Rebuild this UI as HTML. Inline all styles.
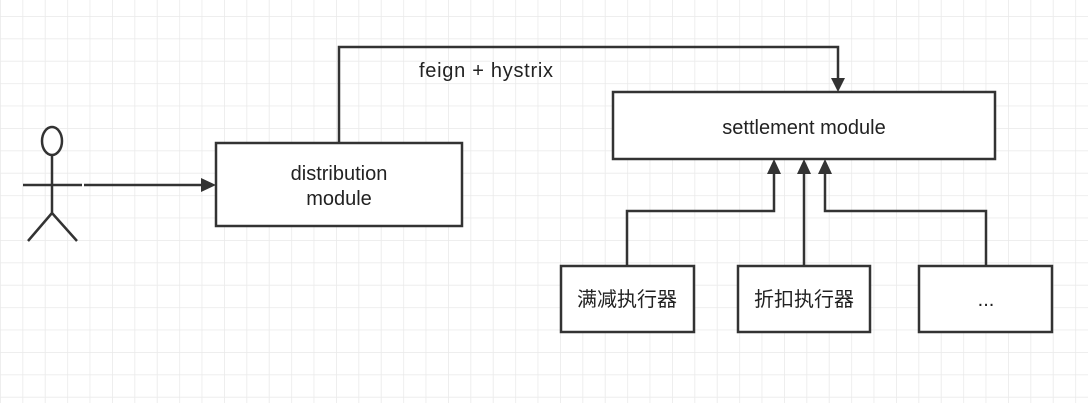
<!DOCTYPE html>
<html><head><style>
html,body{margin:0;padding:0;background:#fff;}
svg{display:block}
text{font-family:"Liberation Sans","Noto Sans CJK SC",sans-serif;font-size:20px;fill:#222}
</style></head><body>
<svg width="1088" height="403" xmlns="http://www.w3.org/2000/svg">
<defs>
<pattern id="g" x="0" y="16" width="22.4" height="22.4" patternUnits="userSpaceOnUse">
<path d="M0 0H22.4M0 0V22.4" stroke="#e9e9e9" stroke-width="1.5" fill="none"/>
</pattern>
</defs>
<rect width="1088" height="403" fill="url(#g)"/>
<g stroke="#333" stroke-width="2.5" fill="none">
<ellipse cx="52" cy="141" rx="10" ry="14" fill="#fff"/>
<path d="M52 155V213M23 185H82M52 213L28 241M52 213L77 241"/>
<path d="M84 185H203" />
<path d="M339 143V47H838V80" />
<path d="M627 266V211H774V172" />
<path d="M804 266V172" />
<path d="M986 266V211H825V172" />
</g>
<g fill="#333">
<path d="M201 178L216 185L201 192z"/>
<path d="M831 78L838 92L845 78z"/>
<path d="M767 174L774 159L781 174z"/>
<path d="M797 174L804 159L811 174z"/>
<path d="M818 174L825 159L832 174z"/>
</g>
<g stroke="#333" stroke-width="2.5" fill="#fff">
<rect x="216" y="143" width="246" height="83"/>
<rect x="613" y="92" width="382" height="67"/>
<rect x="561" y="266" width="133" height="66"/>
<rect x="738" y="266" width="132" height="66"/>
<rect x="919" y="266" width="133" height="66"/>
</g>
<text x="419" y="77" textLength="134">feign + hystrix</text>
<text x="339" y="180" text-anchor="middle">distribution</text>
<text x="339" y="205" text-anchor="middle">module</text>
<text x="804" y="134" text-anchor="middle">settlement module</text>
<text x="627" y="306" text-anchor="middle">满减执行器</text>
<text x="804" y="306" text-anchor="middle">折扣执行器</text>
<text x="986" y="306" text-anchor="middle">...</text>
</svg>
</body></html>
